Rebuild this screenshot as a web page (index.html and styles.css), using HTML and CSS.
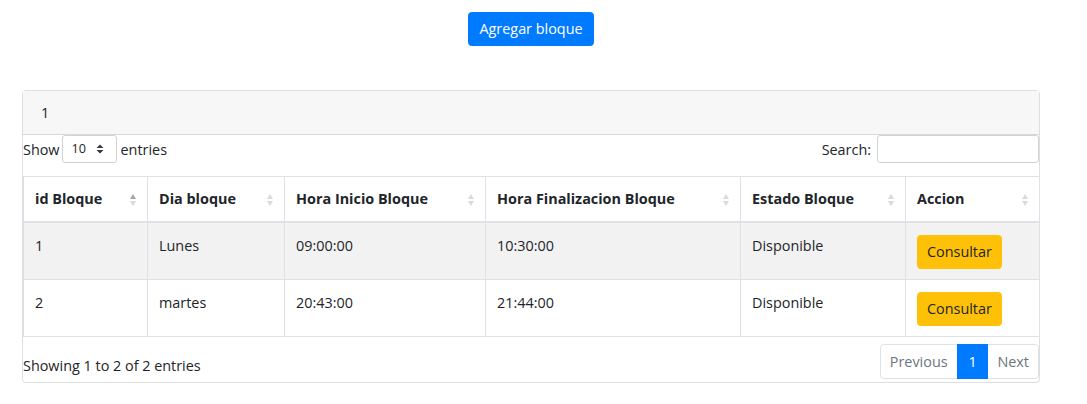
FILE: index.html
```html
<!DOCTYPE html>
<html lang="es">
<head>
<meta charset="utf-8">
<title>Bloques</title>
<link rel="stylesheet" href="styles.css">
</head>
<body>
<div class="wrap">
  <div class="top">
    <button class="btn btn-primary">Agregar bloque</button>
  </div>
  <div class="card">
    <div class="card-header">1</div>
    <div class="card-body">
      <div class="dt-top">
        <label class="length">Show
          <span class="select">10
            <svg class="sel-arrow" width="8" height="10" viewBox="0 0 8 10"><path d="M4 0.5L7.5 4H0.5Z M4 9.5L0.5 6H7.5Z" fill="#343a40"/></svg>
          </span>
          entries</label>
        <label class="filter">Search: <span class="search"></span></label>
      </div>
      <table class="table">
        <colgroup>
          <col style="width:124px"><col style="width:137px"><col style="width:201px"><col style="width:255px"><col style="width:165px"><col style="width:134px">
        </colgroup>
        <thead>
          <tr>
            <th class="asc">id Bloque<span class="sort"><i class="up"></i><i class="down"></i></span></th>
            <th>Dia bloque<span class="sort"><i class="up"></i><i class="down"></i></span></th>
            <th>Hora Inicio Bloque<span class="sort"><i class="up"></i><i class="down"></i></span></th>
            <th>Hora Finalizacion Bloque<span class="sort"><i class="up"></i><i class="down"></i></span></th>
            <th>Estado Bloque<span class="sort"><i class="up"></i><i class="down"></i></span></th>
            <th>Accion<span class="sort"><i class="up"></i><i class="down"></i></span></th>
          </tr>
        </thead>
        <tbody>
          <tr class="odd">
            <td>1</td><td>Lunes</td><td>09:00:00</td><td>10:30:00</td><td>Disponible</td>
            <td><button class="btn btn-warning">Consultar</button></td>
          </tr>
          <tr>
            <td>2</td><td>martes</td><td>20:43:00</td><td>21:44:00</td><td>Disponible</td>
            <td><button class="btn btn-warning">Consultar</button></td>
          </tr>
        </tbody>
      </table>
      <div class="dt-bottom">
        <div class="info">Showing 1 to 2 of 2 entries</div>
        <ul class="pagination">
          <li class="pg-link disabled">Previous</li>
          <li class="pg-link active">1</li>
          <li class="pg-link disabled">Next</li>
        </ul>
      </div>
    </div>
  </div>
</div>
</body>
</html>
```
FILE: styles.css
```css
* { box-sizing: border-box; }
body {
  margin: 0;
  font-family: "Open Sans", "Noto Sans", sans-serif;
  font-size: 14.4px;
  line-height: 1.5;
  color: #212529;
  background: #fff;
}
.wrap {
  width: 1040px;
  padding-left: 22px;
  padding-top: 12px;
}
.top {
  display: flex;
  justify-content: center;
  margin-bottom: 44px;
}
.btn {
  font-family: inherit;
  font-size: 14.4px;
  line-height: 21.6px;
  padding: 5.4px 10.8px;
  border: 1px solid transparent;
  border-radius: 3.6px;
  cursor: pointer;
}
.btn-primary {
  background: #007bff;
  border-color: #007bff;
  color: #fff;
}
.btn-warning {
  background: #ffc107;
  border-color: #ffc107;
  color: #212529;
  padding-left: 9px;
  padding-right: 9px;
}
.card {
  border: 1px solid rgba(0,0,0,.125);
  border-radius: 3.6px;
}
.card-header {
  background: #f7f7f7;
  border-bottom: 1px solid rgba(0,0,0,.125);
  padding: 10.8px 18px;
  height: 44px;
}
.dt-top {
  display: flex;
  justify-content: space-between;
  align-items: center;
  height: 28px;
  margin-bottom: 13px;
}
.length, .filter {
  display: flex;
  align-items: center;
}
.select {
  display: inline-flex;
  align-items: center;
  justify-content: space-between;
  width: 55px;
  height: 28px;
  margin: 0 4px 0 2px;
  padding: 0 12px 0 9px;
  border: 1px solid #ced4da;
  border-radius: 3px;
  font-size: 12.6px;
}
.search {
  display: inline-block;
  width: 162px;
  height: 28px;
  margin-left: 6px;
  border: 1px solid #ced4da;
  border-radius: 3px;
}
.table {
  width: 1016px;
  border-collapse: collapse;
  table-layout: fixed;
}
.table th, .table td {
  border: 1px solid #dee2e6;
  padding: 10.8px 11px;
  text-align: left;
  vertical-align: top;
}
.table td {
  padding-top: 12px;
  padding-bottom: 9.6px;
}
.table th {
  position: relative;
  border-bottom: 2px solid #dee2e6;
  font-weight: 700;
  padding-right: 27px;
}
.table td .btn { margin: 0; }
.table tr.odd td { background: #f2f2f2; }
.sort {
  position: absolute;
  right: 11px;
  top: 17px;
  display: flex;
  flex-direction: column;
  gap: 2px;
}
.sort i {
  display: block;
  width: 0;
  height: 0;
  border-left: 3px solid transparent;
  border-right: 3px solid transparent;
}
.sort .up { border-bottom: 5px solid #d9dadc; }
.sort .down { border-top: 5px solid #d9dadc; }
th.asc .sort .up { border-bottom-color: #a3a5a8; }
.dt-bottom {
  display: flex;
  justify-content: space-between;
  align-items: flex-end;
  padding: 7px 0 3px;
}
.info { padding-bottom: 2px; }
.pagination {
  display: flex;
  margin: 0;
  padding: 0;
  list-style: none;
}
.pg-link {
  padding: 6px 9px;
  line-height: 21px;
  border: 1px solid #dee2e6;
  margin-left: -1px;
  color: #6c757d;
}
.pg-link:first-child { border-radius: 3.6px 0 0 3.6px; margin-left: 0; }
.pg-link:last-child { border-radius: 0 3.6px 3.6px 0; }
.pg-link.active {
  background: #007bff;
  border-color: #007bff;
  color: #fff;
  position: relative;
  padding: 6px 10.8px;
}
```
